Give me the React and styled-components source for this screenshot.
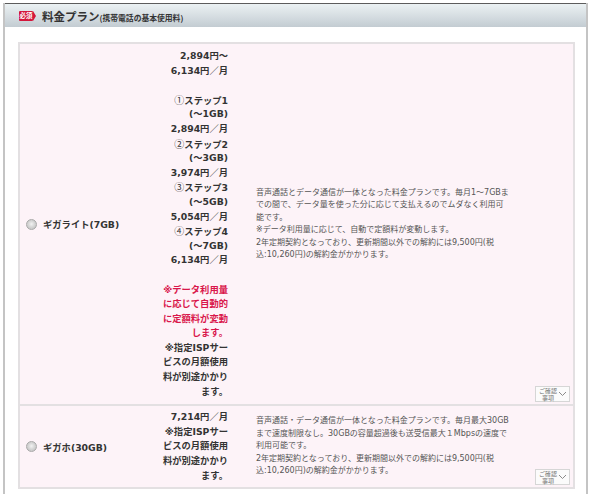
import React from 'react';
import styled, {createGlobalStyle} from 'styled-components';

const GlobalStyle = createGlobalStyle`
    html, body {
        margin: 0;
        padding: 0;
        background: #fff;
    }
    body {
        font-family: "DejaVu Sans", "Noto Sans CJK JP", sans-serif;
        color: #333;
    }
`

const Frame = styled.div`
    margin: 3px 0 0 3px;
    width: 581px;
    min-height: 491px;
    border-left: 2px solid #c4c4c4;
    border-right: 2px solid #c4c4c4;
    box-sizing: content-box;
`

const Header = styled.div`
    display: flex;
    align-items: center;
    height: 23px;
    padding-left: 14px;
    border-top: 1px solid #5c5c5c;
    background: linear-gradient(#ebf1f3, #c3ccd2);
`

const Badge = styled.span`
    position: relative;
    display: inline-flex;
    align-items: center;
    justify-content: center;
    height: 10px;
    width: 14px;
    margin-right: 9px;
    background: #d3163b;
    border-radius: 1px;
    color: #fff;
    font-family: "Noto Sans CJK JP", sans-serif;
    font-size: 6.5px;
    font-weight: bold;
    line-height: 1;
    &::after {
        content: '';
        position: absolute;
        right: -3px;
        top: 0;
        border-top: 5px solid transparent;
        border-bottom: 5px solid transparent;
        border-left: 3px solid #d3163b;
    }
`

const Title = styled.h2`
    margin: 0;
    font-family: "Noto Sans CJK JP", sans-serif;
    font-size: 11.5px;
    font-weight: bold;
    color: #333;
    small {
        font-size: 7.8px;
        font-weight: bold;
    }
`

const Body = styled.div`
    padding: 15px 11px 0 13px;
`

const Card = styled.div`
    border: 2px solid #e3e0e2;
    background: #fdf3f8;
`

const Row = styled.div`
    position: relative;
    display: grid;
    grid-template-columns: 140px 72px 1fr;
    align-items: center;
    padding: ${props => props.$pad}px 0;
    & + & {
        border-top: 2px solid #e3e0e2;
    }
`

const Label = styled.label`
    display: flex;
    align-items: center;
    gap: 6px;
    padding-left: 6px;
    font-size: 9.3px;
    font-weight: bold;
    color: #333;
`

const Radio = styled.span`
    display: inline-block;
    width: 9px;
    height: 9px;
    border-radius: 50%;
    border: 1px solid #a9a9a9;
    background: radial-gradient(circle at 50% 45%, #f2f2f2 0, #d6d6d6 45%, #bdbdbd 100%);
`

const Price = styled.div`
    padding-right: 4px;
    text-align: right;
    font-size: 9.3px;
    font-weight: bold;
    line-height: 14.6px;
    white-space: nowrap;
`

const PriceLine = styled.div`
    height: 14.6px;
    color: ${props => props.$red ? '#d9164b' : '#333'};
`

const StepNo = styled.span`
    font-family: "Noto Sans CJK JP", sans-serif;
    font-size: 10px;
    font-weight: normal;
`

const Desc = styled.div`
    padding-left: 24px;
    font-size: 8px;
    line-height: 12.5px;
    color: #555;
    white-space: nowrap;
`

const Confirm = styled.button`
    position: absolute;
    right: 3px;
    bottom: 2px;
    display: flex;
    align-items: center;
    justify-content: space-between;
    width: 35px;
    height: 16px;
    padding: 0 2px 0 3px;
    border: 1px solid #d6d6d6;
    background: #fbfbfb;
    cursor: pointer;
`

const ConfirmText = styled.div`
    display: flex;
    flex-direction: column;
    align-items: center;
    font-family: "Noto Sans CJK JP", sans-serif;
    font-size: 6px;
    line-height: 7px;
    color: #777;
    white-space: nowrap;
`

const Chevron = () => (
    <svg width="9" height="6" viewBox="0 0 9 6">
        <path d="M1 1 L4.5 4.5 L8 1" fill="none" stroke="#8a8a8a" strokeWidth="1"/>
    </svg>
)

const plans = [
    {
        name: 'ギガライト(7GB)',
        pad: 5,
        price: [
            '2,894円～', '6,134円／月', '',
            '①ステップ1', '(～1GB)', '2,894円／月',
            '②ステップ2', '(～3GB)', '3,974円／月',
            '③ステップ3', '(～5GB)', '5,054円／月',
            '④ステップ4', '(～7GB)', '6,134円／月', '',
            {red: true, text: '※データ利用量'},
            {red: true, text: 'に応じて自動的'},
            {red: true, text: 'に定額料が変動'},
            {red: true, text: 'します。'},
            '※指定ISPサー', 'ビスの月額使用', '料が別途かかり', 'ます。',
        ],
        desc: [
            '音声通話とデータ通信が一体となった料金プランです。毎月1～7GBま',
            'での間で、データ量を使った分に応じて支払えるのでムダなく利用可',
            '能です。',
            '※データ利用量に応じて、自動で定額料が変動します。',
            '2年定期契約となっており、更新期間以外での解約には9,500円(税',
            '込:10,260円)の解約金がかかります。',
        ],
    },
    {
        name: 'ギガホ(30GB)',
        pad: 4,
        price: ['7,214円／月', '※指定ISPサー', 'ビスの月額使用', '料が別途かかり', 'ます。'],
        desc: [
            '音声通話・データ通信が一体となった料金プランです。毎月最大30GB',
            'まで速度制限なし。30GBの容量超過後も送受信最大１Mbpsの速度で',
            '利用可能です。',
            '2年定期契約となっており、更新期間以外での解約には9,500円(税',
            '込:10,260円)の解約金がかかります。',
        ],
    },
]

const stepMarks = '①②③④'

const PriceText = ({text}) => {
    if (text && stepMarks.includes(text[0])) {
        return <><StepNo>{text[0]}</StepNo>{text.slice(1)}</>
    }
    return text
}

const PlanRow = ({plan}) => (
    <Row $pad={plan.pad}>
        <Label>
            <Radio/>
            {plan.name}
        </Label>
        <Price>
            {plan.price.map((line, i) => {
                const item = typeof line === 'string' ? {text: line} : line
                return (
                    <PriceLine key={i} $red={item.red}>
                        <PriceText text={item.text}/>
                    </PriceLine>
                )
            })}
        </Price>
        <Desc>
            {plan.desc.map((line, i) => <div key={i}>{line}</div>)}
        </Desc>
        <Confirm>
            <ConfirmText>
                <span>ご確認</span>
                <span>事項</span>
            </ConfirmText>
            <Chevron/>
        </Confirm>
    </Row>
)

const App = () => (
    <>
        <GlobalStyle/>
        <Frame>
            <Header>
                <Badge>必須</Badge>
                <Title>料金プラン<small>(携帯電話の基本使用料)</small></Title>
            </Header>
            <Body>
                <Card>
                    {plans.map(plan => <PlanRow key={plan.name} plan={plan}/>)}
                </Card>
            </Body>
        </Frame>
    </>
)

export default App;
